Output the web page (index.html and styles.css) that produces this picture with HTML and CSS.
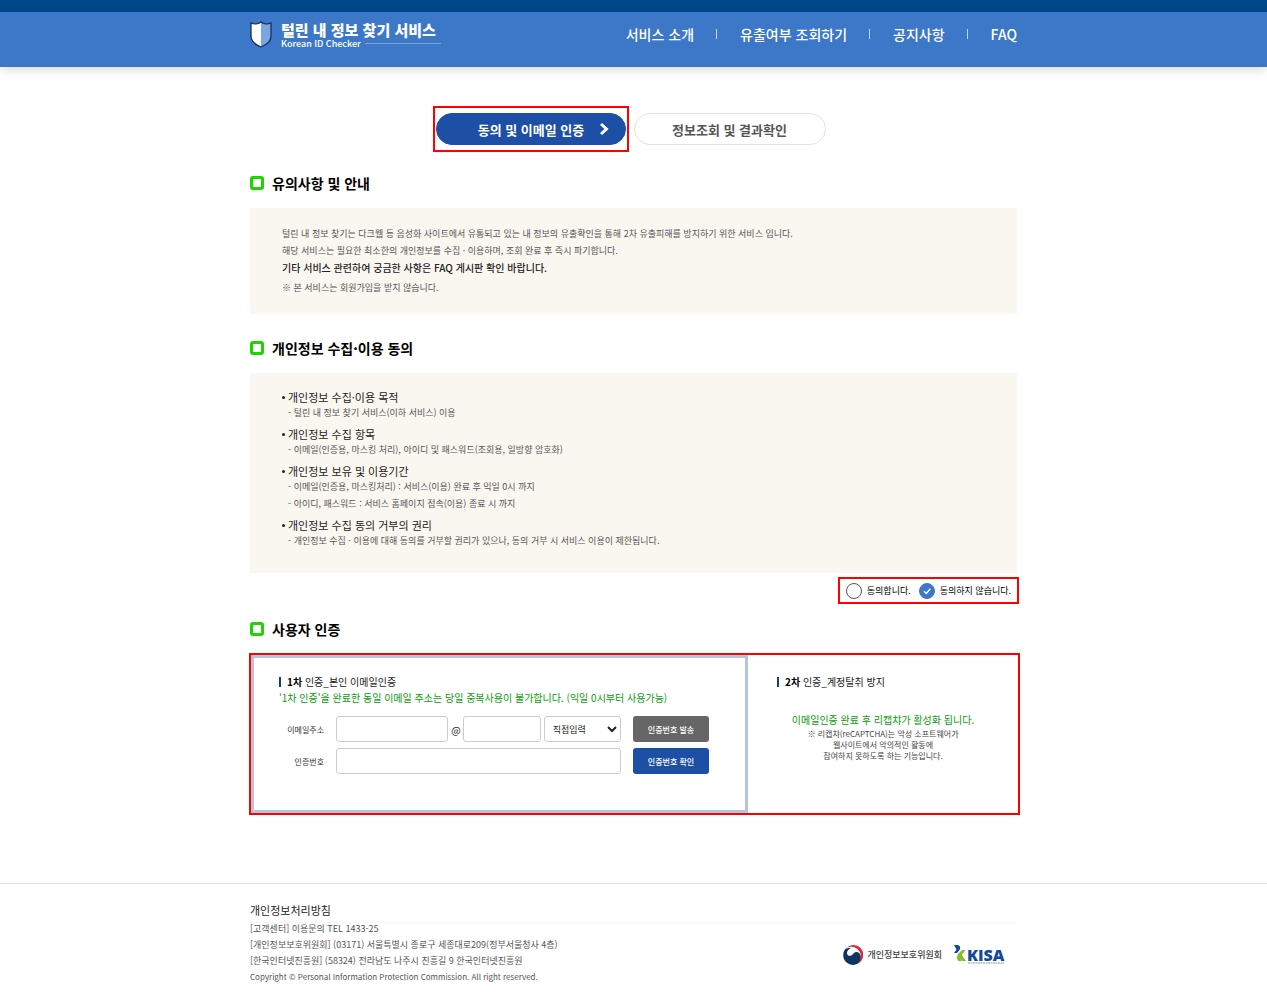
FILE: index.html
```html
<!DOCTYPE html>
<html lang="ko">
<head>
<meta charset="utf-8">
<meta name="viewport" content="width=device-width, initial-scale=1">
<title>털린 내 정보 찾기 서비스</title>
<link rel="stylesheet" href="styles.css">
</head>
<body>
<header class="site-header">
  <div class="container header-inner">
    <a class="brand" href="#">
      <svg class="brand-mark" viewBox="0 0 22 27" aria-hidden="true">
        <path d="M11 1C9 3 4 3.400 1 2V15C1 20 6 24 11 26Z" fill="#fff"/>
        <path d="M11 1C13 3 18 3.400 21 2V15C21 20 16 24 11 26Z" fill="#7ba7de"/>
        <path d="M11 1C9 3 4 3.400 1 2V15C1 20 6 24 11 26C16 24 21 20 21 15V2C18 3.400 13 3 11 1Z" fill="none" stroke="#1b2f5e" stroke-width="1.300"/>
      </svg>
      <span class="brand-text">
        <span class="brand-name">털린 내 정보 찾기 서비스</span>
        <span class="brand-sub">Korean ID Checker</span>
      </span>
    </a>
    <nav>
      <ul class="menu">
        <li><a href="#">서비스 소개</a></li>
        <li><a href="#">유출여부 조회하기</a></li>
        <li><a href="#">공지사항</a></li>
        <li><a href="#">FAQ</a></li>
      </ul>
    </nav>
  </div>
</header>

<main class="container">
  <div class="steps">
    <div class="mark mark-step">
      <button class="step step-current" type="button">
        <span>동의 및 이메일 인증</span>
        <svg class="chevron" viewBox="0 0 10 14" aria-hidden="true"><path d="M2 2L7.500 7L2 12" fill="none" stroke="#fff" stroke-width="3"/></svg>
      </button>
    </div>
    <button class="step" type="button">정보조회 및 결과확인</button>
  </div>

  <section>
    <h2 class="heading">유의사항 및 안내</h2>
    <div class="panel notice">
      <p>털린 내 정보 찾기는 다크웹 등 음성화 사이트에서 유통되고 있는 내 정보의 유출확인을 통해 2차 유출피해를 방지하기 위한 서비스 입니다.</p>
      <p>해당 서비스는 필요한 최소한의 개인정보를 수집 · 이용하며, 조회 완료 후 즉시 파기합니다.</p>
      <p class="strong">기타 서비스 관련하여 궁금한 사항은 FAQ 게시판 확인 바랍니다.</p>
      <p class="footnote">※ 본 서비스는 회원가입을 받지 않습니다.</p>
    </div>
  </section>

  <section>
    <h2 class="heading">개인정보 수집·이용 동의</h2>
    <div class="panel terms">
      <div class="term">
        <h3>개인정보 수집·이용 목적</h3>
        <p>- 털린 내 정보 찾기 서비스(이하 서비스) 이용</p>
      </div>
      <div class="term">
        <h3>개인정보 수집 항목</h3>
        <p>- 이메일(인증용, 마스킹 처리), 아이디 및 패스워드(조회용, 일방향 암호화)</p>
      </div>
      <div class="term">
        <h3>개인정보 보유 및 이용기간</h3>
        <p>- 이메일(인증용, 마스킹처리) : 서비스(이용) 완료 후 익일 0시 까지</p>
        <p>- 아이디, 패스워드 : 서비스 홈페이지 접속(이용) 종료 시 까지</p>
      </div>
      <div class="term">
        <h3>개인정보 수집 동의 거부의 권리</h3>
        <p>- 개인정보 수집 · 이용에 대해 동의를 거부할 권리가 있으나, 동의 거부 시 서비스 이용이 제한됩니다.</p>
      </div>
    </div>
    <div class="consent">
      <div class="mark mark-consent">
        <label><input class="radio" type="radio" name="agree">동의합니다.</label>
        <label><input class="radio" type="radio" name="agree" checked>동의하지 않습니다.</label>
      </div>
    </div>
  </section>

  <section>
    <h2 class="heading heading-auth">사용자 인증</h2>
    <div class="mark mark-auth">
      <form class="auth-email">
        <h3 class="auth-title"><span><b>1차</b> 인증_본인 이메일인증</span></h3>
        <p class="green">'1차 인증'을 완료한 동일 이메일 주소는 당일 중복사용이 불가합니다. (익일 0시부터 사용가능)</p>
        <div class="fields">
          <label for="mail">이메일주소</label>
          <div class="mail-row">
            <input class="box" id="mail" type="text">
            <span class="at">@</span>
            <input class="box" type="text" aria-label="이메일 도메인">
            <select class="box" aria-label="도메인 선택"><option>직접입력</option></select>
          </div>
          <button class="action action-gray" type="button">인증번호 발송</button>
          <label for="code">인증번호</label>
          <input class="box" id="code" type="text">
          <button class="action" type="button">인증번호 확인</button>
        </div>
      </form>
      <div class="auth-captcha">
        <h3 class="auth-title"><span><b>2차</b> 인증_계정탈취 방지</span></h3>
        <p class="green captcha-lead">이메일인증 완료 후 리캡챠가 활성화 됩니다.</p>
        <p class="captcha-note">※ 리캡챠(reCAPTCHA)는 악성 소프트웨어가<br>웹사이트에서 악의적인 활동에<br>참여하지 못하도록 하는 기능입니다.</p>
      </div>
    </div>
  </section>
</main>

<footer class="site-footer">
  <div class="container">
    <div class="policy"><a href="#">개인정보처리방침</a></div>
    <div class="footer-row">
      <address class="address">
        <span>[고객센터] 이용문의 TEL 1433-25</span>
        <span>[개인정보보호위원회] (03171) 서울특별시 종로구 세종대로209(정부서울청사 4층)</span>
        <span>[한국인터넷진흥원] (58324) 전라남도 나주시 진흥길 9 한국인터넷진흥원</span>
        <small class="copyright">Copyright © Personal Information Protection Commission. All right reserved.</small>
      </address>
      <div class="orgs">
        <a class="org" href="#">
          <svg class="taegeuk" viewBox="0 0 20 20" aria-hidden="true">
            <path d="M4 2.500A9.800 9.800 0 1 1 13.500 19.200A9.200 9.200 0 0 0 16.500 6.500C14 2.500 9 .8 4 2.500Z" fill="#e6243c"/>
            <path d="M1.500 5A10 10 0 0 0 10 20C15 20 18.200 16 17.800 11.500C17.300 7 13 5.500 10.500 8.500C8.300 11.500 5.500 11.500 4.300 9.300C3.300 7 5 4.500 8 3.300C5 2.300 2.800 3.200 1.500 5Z" fill="#0f3562"/>
          </svg>
          <span>개인정보보호위원회</span>
        </a>
        <a class="org" href="#" aria-label="KISA">
          <svg class="kisa" viewBox="0 0 51 20">
            <path d="M0 0H3.500C6 .5 7 2.500 5.500 5L3 8H0L2.500 4.500Z" fill="#124a9c"/>
            <path d="M8 5H11.500L7.800 10L12 16H8.500L4.300 11.500C3.500 10.500 3.500 9.500 4.300 8.700Z" fill="#86bc25"/>
            <path d="M4 10L8 16H4.500L2.500 13Z" fill="#86bc25"/>
            <text class="kisa-name" x="13" y="16">KISA</text>
            <path d="M14 18H50" stroke="#8d97a5" stroke-width="1" stroke-dasharray="2 .5"/>
          </svg>
        </a>
      </div>
    </div>
  </div>
</footer>
</body>
</html>
```
FILE: styles.css
```css
*, *::before, *::after { box-sizing: border-box; }

body {
  margin: 0;
  background: #fff;
  color: #222;
  font-family: "Noto Sans CJK KR", "Noto Sans", sans-serif;
  font-size: 10px;
  line-height: 17px;
}

h2, h3, p, ul { margin: 0; padding: 0; font-weight: 400; }
a { color: inherit; text-decoration: none; }
button, input, select { font-family: inherit; margin: 0; }

.container { max-width: 767px; margin: 0 auto; }

/* Header */
.site-header {
  border-top: 12px solid #00478a;
  background: #3c77c8;
  color: #fff;
  box-shadow: 0 2px 10px rgba(0, 0, 0, .16);
}
.header-inner {
  display: flex;
  justify-content: space-between;
  align-items: center;
  padding-bottom: 12px;
  min-height: 55px;
}
.brand { display: flex; align-items: center; gap: 9px; padding-top: 2px; }
.brand-mark { width: 22px; height: 27px; }
.brand-text { display: grid; min-width: 160px; }
.brand-name { font-size: 15px; font-weight: 900; line-height: 18px; }
.brand-sub {
  display: flex;
  align-items: center;
  gap: 4px;
  font-size: 9px;
  font-weight: 500;
  line-height: 10px;
}
.brand-sub::after { content: ""; flex: 1; height: 1px; background: #7ba5de; }
.menu { display: flex; list-style: none; font-size: 14px; font-weight: 500; line-height: 20px; }
.menu li { display: flex; align-items: center; }
.menu li + li::before { content: ""; width: 1px; height: 10px; margin: 0 23px 0 22px; background: #c4d6ef; }

/* Red guide frames */
.mark { border: 2px solid #f00; }

/* Steps */
.steps { display: flex; justify-content: center; align-items: center; gap: 5px; padding: 39px 9px 0 0; }
.mark-step { padding: 5px 1px; }
.step {
  display: flex;
  align-items: center;
  justify-content: center;
  gap: 17px;
  width: 192px;
  height: 32px;
  padding: 0;
  border: 1px solid #e2e2e2;
  border-radius: 16px;
  background: #fff;
  color: #555;
  font-size: 13px;
  font-weight: 700;
}
.step-current { width: 190px; padding-left: 26px; gap: 15px; border-color: #1c4fa5; background: #1c4fa5; color: #fff; }
.chevron { width: 10px; height: 14px; }

/* Sections */
.heading {
  display: flex;
  align-items: center;
  gap: 8px;
  padding: 21px 0 15px;
  color: #000;
  font-size: 14px;
  font-weight: 700;
  line-height: 20px;
}
.heading::before { content: ""; width: 14px; height: 14px; border: 3px solid #1fd500; border-radius: 3px; }
.heading-auth { padding: 15px 0 14px; }
.panel { padding: 17px 32px; background: #faf7f0; color: #555; margin-bottom: 3px; font-size: 9px; }
.notice { padding-bottom: 18px; }
.strong { color: #222; font-size: 10px; font-weight: 500; }
.footnote { padding-top: 3px; }

.terms { display: grid; gap: 6px; padding-bottom: 24px; }
.term h3 { display: flex; align-items: center; gap: 3px; color: #222; font-size: 11px; line-height: 14px; }
.term h3::before { content: ""; width: 3px; height: 3px; border-radius: 50%; background: #222; }
.term p { padding-left: 6px; }

.consent { display: flex; justify-content: flex-end; padding-top: 1px; }
.mark-consent { display: flex; gap: 8px; margin-right: -2px; padding: 4px 6px 3px; }
.mark-consent label { display: flex; align-items: center; gap: 5px; color: #000; font-size: 9px; line-height: 16px; }
.radio {
  appearance: none;
  width: 16px;
  height: 16px;
  border: 1px solid #555;
  border-radius: 50%;
  background: #fff;
}
.radio:checked {
  border-color: #3c77c8;
  background: #3c77c8 url("data:image/svg+xml,%3Csvg xmlns='http://www.w3.org/2000/svg' viewBox='0 0 14 14'%3E%3Cpath d='M4 7.200L6.300 9.500L10.300 4.700' fill='none' stroke='white' stroke-width='1.400'/%3E%3C/svg%3E");
}

/* Verification */
.mark-auth { display: grid; grid-template-columns: 497fr 270fr; margin: 0 -3px 0 -1px; min-height: 162px; }
.auth-email { border: 3px solid #b6c5dc; padding: 16px 36px 16px 25px; }
.auth-captcha { padding: 19px 29px; text-align: center; }
.auth-title { display: flex; align-items: center; gap: 6px; color: #222; font-size: 10px; line-height: 16px; }
.auth-title::before { content: ""; width: 2px; height: 10px; background: #0d3f86; }
.auth-title b { color: #000; font-weight: 700; }
.green { color: #099c09; line-height: 16px; white-space: nowrap; }
.fields {
  display: grid;
  grid-template-columns: 45px 1fr 76px;
  gap: 6px 12px;
  align-items: center;
  padding-top: 10px;
}
.fields label { color: #333; font-size: 8px; text-align: right; }
.mail-row { display: grid; grid-template-columns: 112fr 15px 77fr 3px 77fr; align-items: center; }
.mail-row select { grid-column: 5; }
.at { font-size: 10px; text-align: center; }
.box {
  width: 100%;
  height: 26px;
  padding: 0 4px;
  border: 1px solid #ccc;
  border-radius: 3px;
  background: #fff;
  color: #222;
  font-size: 9px;
}
.action {
  height: 26px;
  padding: 0;
  border: 0;
  border-radius: 3px;
  background: #1c4fa5;
  color: #fff;
  font-size: 8px;
  font-weight: 500;
}
.action-gray { background: #666; }
.captcha-lead { padding-top: 22px; }
.captcha-note { color: #444; font-size: 8px; line-height: 11px; }

/* Footer */
.site-footer { margin-top: 68px; padding: 18px 0 24px; border-top: 1px solid #e2e2e2; }
.policy { padding-bottom: 4px; border-bottom: 1px solid #f6f6f6; font-size: 11px; line-height: 16px; }
.footer-row { display: flex; justify-content: space-between; align-items: center; }
.address { display: grid; gap: 4px; color: #555; font-size: 9px; font-style: normal; line-height: 12px; }
.copyright { font-size: 8px; }
.orgs { display: flex; align-items: center; gap: 12px; padding: 4px 12px 0 0; }
.org { display: flex; align-items: center; gap: 4px; color: #444; font-size: 9px; font-weight: 500; line-height: 12px; }
.taegeuk { width: 20px; height: 20px; }
.kisa { width: 51px; height: 20px; }
.kisa-name { fill: #124a9c; font-family: "Open Sans", sans-serif; font-size: 16px; font-weight: 800; }
```
